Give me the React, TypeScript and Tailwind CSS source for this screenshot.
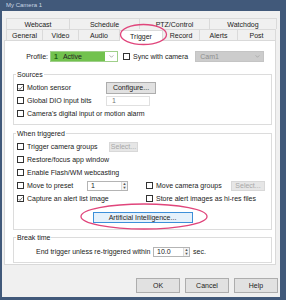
import React from "react";

const Cb = ({ checked = false }: { checked?: boolean }) => (
  <span className="w-[7px] h-[7px] border border-[#333] bg-white shrink-0 flex items-center justify-center">
    {checked && (
      <svg viewBox="0 0 8 8" className="w-[6px] h-[6px]">
        <path d="M1 4.2 L3 6.2 L7 1.6" stroke="#333" fill="none" strokeWidth="1.1" />
      </svg>
    )}
  </span>
);

const Check = ({ label, checked = false, w }: { label: string; checked?: boolean; w?: string }) => (
  <div className={`flex items-center gap-[3px] shrink-0 ${w ?? ""}`}>
    <Cb checked={checked} />
    <span className="whitespace-nowrap">{label}</span>
  </div>
);

const Spin = ({ value, w }: { value: string; w: string }) => (
  <div className={`h-[10px] ${w} border border-[#b4b4b4] bg-white flex items-center`}>
    <span className="flex-1 pl-[3px]">{value}</span>
    <div className="w-[6px] h-full flex flex-col items-center justify-center text-[4px] leading-[4px] text-[#555] bg-[#f4f4f4] border-l border-[#dcdcdc]">
      <span>▲</span>
      <span>▼</span>
    </div>
  </div>
);

const Btn = ({ label, w, disabled = false }: { label: string; w: string; disabled?: boolean }) => (
  <div
    className={`h-[10px] ${w} flex items-center justify-center border ${
      disabled ? "border-[#d8d8d8] bg-[#e6e6e6] text-[#a8a8a8]" : "border-[#adadad] bg-[#e1e1e1]"
    }`}
  >
    {label}
  </div>
);

const row1 = [
  { t: "Webcast", w: "w-[64px]" },
  { t: "Schedule", w: "w-[70px]" },
  { t: "PTZ/Control", w: "w-[70px]" },
  { t: "Watchdog", w: "w-[67px]" },
];
const row2 = [
  { t: "General", w: "w-[37px]" },
  { t: "Video", w: "w-[36px]" },
  { t: "Audio", w: "w-[41px]" },
  { t: "Trigger", w: "w-[43px]", on: true },
  { t: "Record", w: "w-[37px]" },
  { t: "Alerts", w: "w-[38px]" },
  { t: "Post", w: "w-[38px]" },
];

export default function App() {
  return (
    <div className="relative w-[286px] h-[300px] bg-[#41597a] flex flex-col font-['Liberation_Sans',Arial,sans-serif] text-[7px] leading-[9px] text-[#222]">
      {/* title bar */}
      <div className="h-[11px] shrink-0 pl-[6px] flex items-center text-[6px] text-[#c9d5e3]">My Camera 1</div>

      {/* dialog body */}
      <div className="flex-1 ml-[2px] mr-[6px] mb-[3px] bg-[#f0f0f0] flex flex-col pt-[7px]">
        {/* tabs */}
        <div className="ml-[4px] flex h-[11px]">
          {row1.map((t) => (
            <div key={t.t} className={`${t.w} h-full flex items-center justify-center border-t border-r border-[#dadada] first:border-l`}>
              {t.t}
            </div>
          ))}
        </div>
        <div className="ml-[4px] flex h-[11px]">
          {row2.map((t) => (
            <div
              key={t.t}
              className={`${t.w} h-full flex items-center justify-center border-t border-r border-[#dadada] first:border-l ${
                t.on ? "bg-white relative top-[1px] h-[12px]" : ""
              }`}
            >
              {t.t}
            </div>
          ))}
        </div>

        {/* panel */}
        <div className="ml-[2px] w-[272px] h-[225px] bg-white border border-[#d9d9d9] flex flex-col">
          {/* profile row */}
          <div className="mt-[10px] h-[11px] flex items-center">
            <span className="w-[44px] text-right pr-[1px]">Profile:</span>
            <div className="ml-[1px] w-[68px] h-full flex border border-[#9fcf8a]">
              <div className="flex-1 bg-[#72c24e] flex items-center gap-[5px] pl-[3px]">
                <span className="text-[#1d5e12] font-bold">1</span>
                <span>Active</span>
              </div>
              <div className="w-[12px] bg-white flex items-center justify-center text-[#777]">
                <svg viewBox="0 0 6 4" className="w-[5px] h-[3px]">
                  <path d="M0.5 0.5 L3 3 L5.5 0.5" stroke="#777" fill="none" strokeWidth="0.8" />
                </svg>
              </div>
            </div>
            <div className="ml-[5px]">
              <Check label="Sync with camera" />
            </div>
            <div className="ml-[7px] w-[69px] h-full bg-[#cccccc] border border-[#c4c4c4] flex items-center justify-between pl-[4px] pr-[3px] text-[#8e8e8e]">
              <span>Cam1</span>
              <svg viewBox="0 0 6 4" className="w-[5px] h-[3px]">
                <path d="M0.5 0.5 L3 3 L5.5 0.5" stroke="#999" fill="none" strokeWidth="0.8" />
              </svg>
            </div>
          </div>

          {/* Sources */}
          <fieldset className="mt-[8px] ml-[8px] mr-[3px] h-[55px] border border-[#dcdcdc] pl-[3px] pt-[2px]">
            <legend className="px-[1px] -ml-[1px]">Sources</legend>
            <div className="h-[13px] flex items-center">
              <Check label="Motion sensor" checked w="w-[89px]" />
              <Btn label="Configure..." w="w-[50px] h-[12px]" />
            </div>
            <div className="h-[13px] flex items-center">
              <Check label="Global DIO input bits" w="w-[89px]" />
              <div className="w-[44px] h-[10px] border border-[#e0e0e0] text-[#777] pl-[5px] flex items-center">1</div>
            </div>
            <div className="h-[13px] flex items-center">
              <Check label="Camera's digital input or motion alarm" />
            </div>
          </fieldset>

          {/* When triggered */}
          <fieldset className="mt-[4px] ml-[8px] mr-[3px] h-[101px] border border-[#dcdcdc] pl-[3px] pt-[2px]">
            <legend className="px-[1px] -ml-[1px]">When triggered</legend>
            <div className="h-[13px] flex items-center">
              <Check label="Trigger camera groups" w="w-[92px]" />
              <Btn label="Select..." w="w-[29px]" disabled />
            </div>
            <div className="h-[13px] flex items-center">
              <Check label="Restore/focus app window" />
            </div>
            <div className="h-[13px] flex items-center">
              <Check label="Enable Flash/WM webcasting" />
            </div>
            <div className="h-[13px] flex items-center">
              <Check label="Move to preset" w="w-[70px]" />
              <Spin value="1" w="w-[41px]" />
              <div className="ml-[18px]">
                <Check label="Move camera groups" w="w-[85px]" />
              </div>
              <Btn label="Select..." w="w-[34px]" disabled />
            </div>
            <div className="h-[13px] flex items-center">
              <Check label="Capture an alert list image" checked w="w-[129px]" />
              <Check label="Store alert images as hi-res files" />
            </div>
            <div className="mt-[7px] flex justify-center pr-[3px]">
              <div className="w-[100px] h-[11px] flex items-center justify-center border border-[#3c8fd9] bg-[#e5f1fb]">
                Artificial Intelligence...
              </div>
            </div>
          </fieldset>

          {/* Break time */}
          <fieldset className="mt-[3px] ml-[8px] mr-[3px] h-[30px] border border-[#dcdcdc] pl-[3px] pt-[3px]">
            <legend className="px-[1px] -ml-[1px]">Break time</legend>
            <div className="h-[13px] flex items-center pl-[19px]">
              <span className="w-[117px] whitespace-nowrap">End trigger unless re-triggered within</span>
              <Spin value="10.0" w="w-[37px]" />
              <span className="ml-[3px]">sec.</span>
            </div>
          </fieldset>
        </div>

        {/* dialog buttons */}
        <div className="mt-[13px] flex justify-end gap-[5px] pr-[2px]">
          {["OK", "Cancel", "Help"].map((b) => (
            <div key={b} className="w-[44px] h-[15px] flex items-center justify-center bg-[#e1e1e1] border border-[#adadad]">
              {b}
            </div>
          ))}
        </div>
      </div>

      {/* pink highlight ellipses */}
      <svg className="absolute left-0 top-0 pointer-events-none" width="286" height="300">
        <ellipse cx="143.5" cy="34.5" rx="23" ry="10" fill="none" stroke="#e0457b" strokeWidth="1.3" />
        <ellipse cx="144" cy="216.5" rx="63" ry="12.5" fill="none" stroke="#e0457b" strokeWidth="1.3" />
      </svg>
    </div>
  );
}
